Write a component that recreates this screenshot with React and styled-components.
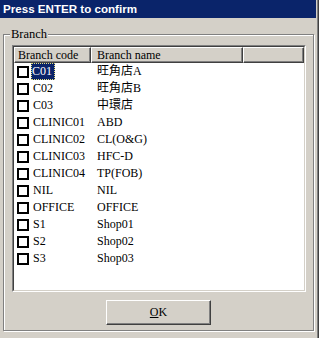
import React from "react";
import styled, { createGlobalStyle } from "styled-components";

const Global = createGlobalStyle`
  html, body { margin: 0; padding: 0; background: #d4d0c8; }
  body { font-family: "Liberation Serif", "Noto Sans CJK TC", serif; }
`;

const Window = styled.div`
  width: 319px;
  height: 338px;
  box-sizing: border-box;
  overflow: hidden;
  background: #d4d0c8;
  border-right: 1px solid #404040;
  display: flex;
`;

const Inner = styled.div`
  flex: 1;
  border-right: 1px solid #808080;
  padding-right: 1px;
  display: flex;
  flex-direction: column;
`;

const TitleBar = styled.div`
  height: 18px;
  background: #0a246a;
  color: #fff;
  font-family: "Liberation Sans", "DejaVu Sans", sans-serif;
  font-weight: bold;
  font-size: 11.6px;
  line-height: 18px;
  padding-left: 3px;
  white-space: nowrap;
`;

const Body = styled.div`
  padding: 16px 0 0 3px;
`;

const GroupBox = styled.div`
  position: relative;
  width: 311px;
  box-sizing: border-box;
  border: 1px solid #808080;
  box-shadow: 1px 1px 0 #fff, inset 1px 1px 0 #fff;
  padding: 10px 0 5px 8px;
  display: flex;
  flex-direction: column;
`;

const Legend = styled.span`
  position: absolute;
  left: 6px;
  top: -8px;
  padding: 0 1px;
  background: #d4d0c8;
  font-size: 12.5px;
  line-height: 14px;
  color: #000;
`;

const ListView = styled.div`
  width: 294px;
  height: 247px;
  box-sizing: border-box;
  border-top: 1px solid #808080;
  border-left: 1px solid #808080;
  border-right: 1px solid #fff;
  border-bottom: 1px solid #fff;
  display: flex;
`;

const ListInner = styled.div`
  flex: 1;
  border-top: 1px solid #404040;
  border-left: 1px solid #404040;
  border-right: 1px solid #d4d0c8;
  border-bottom: 1px solid #d4d0c8;
  background: #fff;
  display: flex;
  flex-direction: column;
  overflow: hidden;
`;

const Header = styled.div`
  display: grid;
  grid-template-columns: 77px 152px 61px;
  height: 16px;
`;

const HeaderCell = styled.div`
  box-sizing: border-box;
  background: #d4d0c8;
  border-top: 1px solid #fff;
  border-left: 1px solid #fff;
  border-bottom: 1px solid #404040;
  border-right: 1px solid #404040;
  box-shadow: inset -1px -1px 0 #808080;
  font-size: 12px;
  line-height: 14px;
  padding-left: ${(p) => p.$pad}px;
  white-space: nowrap;
  overflow: hidden;
  color: #000;
`;

const Rows = styled.div`
  display: flex;
  flex-direction: column;
  padding-top: 0;
`;

const Row = styled.div`
  display: grid;
  grid-template-columns: 77px 152px;
  height: 17px;
  align-items: center;
  font-size: 12px;
  color: #000;
`;

const CodeCell = styled.div`
  display: flex;
  align-items: center;
  padding-left: 3px;
  gap: 2px;
`;

const Check = styled.span`
  width: 12px;
  height: 12px;
  box-sizing: border-box;
  border: 2px solid #000;
  background: #fff;
  flex: none;
`;

const CodeText = styled.span`
  height: 17px;
  line-height: 17px;
  padding: 0 ${(p) => (p.$selected ? "3px 0 1px" : "2px")};
  box-sizing: border-box;
  white-space: nowrap;
  background: ${(p) => (p.$selected ? "#0a246a" : "transparent")};
  color: ${(p) => (p.$selected ? "#fff" : "#000")};
  outline: ${(p) => (p.$selected ? "1px dotted #e8e080" : "none")};
  outline-offset: -1px;
`;

const NameCell = styled.div`
  padding-left: 6px;
  line-height: 17px;
  white-space: nowrap;
`;

const Footer = styled.div`
  display: flex;
  justify-content: center;
  padding-top: 8px;
  margin-left: -8px;
`;

const Button = styled.button`
  width: 105px;
  height: 25px;
  box-sizing: border-box;
  background: #d4d0c8;
  border-top: 1px solid #fff;
  border-left: 1px solid #fff;
  border-right: 1px solid #404040;
  border-bottom: 1px solid #404040;
  box-shadow: inset -1px -1px 0 #808080;
  font-family: "Liberation Serif", serif;
  font-size: 12px;
  color: #000;
  padding: 0;
  u { text-decoration: underline; }
`;

const items = [
  ["C01", "旺角店A"],
  ["C02", "旺角店B"],
  ["C03", "中環店"],
  ["CLINIC01", "ABD"],
  ["CLINIC02", "CL(O&G)"],
  ["CLINIC03", "HFC-D"],
  ["CLINIC04", "TP(FOB)"],
  ["NIL", "NIL"],
  ["OFFICE", "OFFICE"],
  ["S1", "Shop01"],
  ["S2", "Shop02"],
  ["S3", "Shop03"],
];

export default function App() {
  return (
    <>
      <Global />
      <Window>
        <Inner>
          <TitleBar>Press ENTER to confirm</TitleBar>
          <Body>
            <GroupBox>
              <Legend>Branch</Legend>
              <ListView>
                <ListInner>
                  <Header>
                    <HeaderCell $pad={3}>Branch code</HeaderCell>
                    <HeaderCell $pad={5}>Branch name</HeaderCell>
                    <HeaderCell $pad={0} />
                  </Header>
                  <Rows>
                    {items.map(([code, name], i) => (
                      <Row key={code}>
                        <CodeCell>
                          <Check />
                          <CodeText $selected={i === 0}>{code}</CodeText>
                        </CodeCell>
                        <NameCell>{name}</NameCell>
                      </Row>
                    ))}
                  </Rows>
                </ListInner>
              </ListView>
              <Footer>
                <Button>
                  <u>O</u>K
                </Button>
              </Footer>
            </GroupBox>
          </Body>
        </Inner>
      </Window>
    </>
  );
}
